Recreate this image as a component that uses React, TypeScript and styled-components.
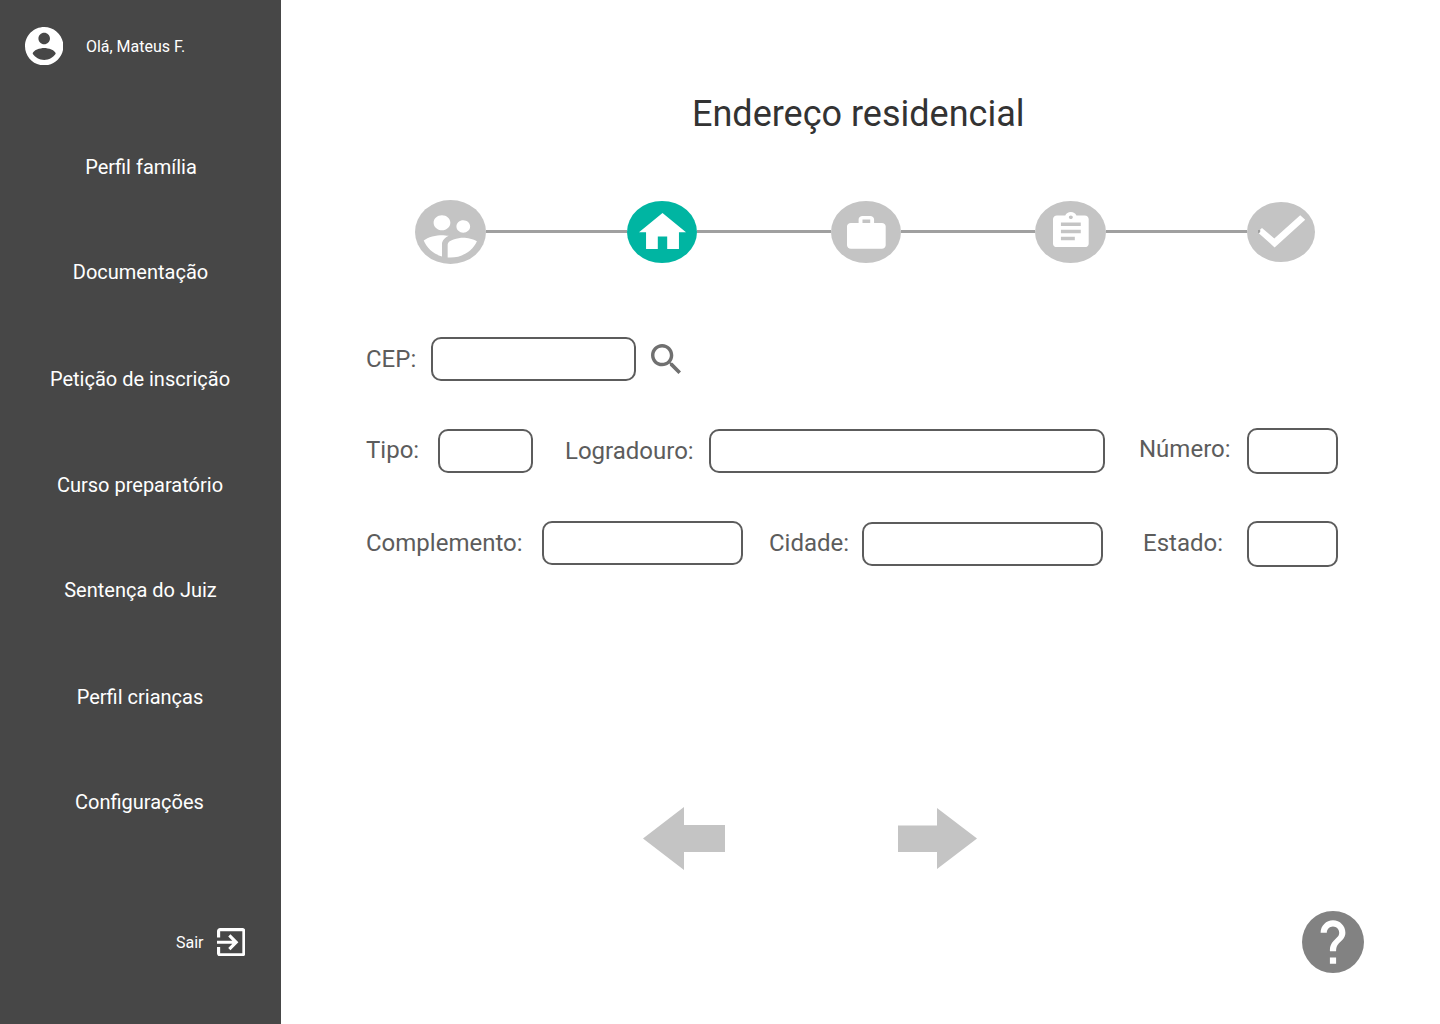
import React from "react";
import styled, { createGlobalStyle } from "styled-components";

const Global = createGlobalStyle`
  *, *::before, *::after { box-sizing: border-box; }
  body { margin: 0; background: #fff; font-family: Roboto, "Liberation Sans", sans-serif; }
`;

const Page = styled.div`
  display: flex;
  width: 1440px;
  height: 1024px;
  overflow: hidden;
`;

const Sidebar = styled.aside`
  display: flex;
  flex-direction: column;
  flex: none;
  width: 281px;
  height: 1024px;
  background: #474747;
  color: #fff;
`;

const User = styled.div`
  display: flex;
  align-items: center;
  height: 92px;
  padding-left: 24.8px;
  gap: 22.7px;
  font-size: 16px;
  line-height: 19px;
`;

const Menu = styled.nav`
  display: grid;
  grid-template-rows: 105px 107px 106px 105px 107px 105px 24px;
  margin-top: 63px;
  padding-left: 1px;
`;

const MenuItem = styled.a<{ $shift?: number }>`
  display: block;
  height: 24px;
  padding-right: ${(p) => p.$shift ?? 0}px;
  font-size: 20px;
  line-height: 24px;
  text-align: center;
  white-space: nowrap;
`;

const Logout = styled.div`
  display: flex;
  align-items: center;
  height: 30px;
  margin-top: 113px;
  padding-left: 176px;
  gap: 13px;
  font-size: 16px;
  line-height: 19px;
`;

const Main = styled.main`
  display: flex;
  flex-direction: column;
  flex: 1;
  height: 1024px;
`;

const Title = styled.h1`
  margin: 93px 0 0 411px;
  font-size: 36px;
  line-height: 42px;
  font-weight: 400;
  color: #333;
  white-space: nowrap;
`;

const Stepper = styled.div`
  display: flex;
  align-items: center;
  height: 64px;
  margin: 65px 0 0 134px;
`;

const Step = styled.div<{ $w: number; $h: number; $active?: boolean }>`
  display: grid;
  flex: none;
  width: ${(p) => p.$w}px;
  height: ${(p) => p.$h}px;
  border-radius: 50%;
  background: ${(p) => (p.$active ? "#00b5a2" : "#c4c4c4")};
`;

const Connector = styled.div<{ $w: number }>`
  flex: none;
  width: ${(p) => p.$w}px;
  height: 3px;
  margin-bottom: 1px;
  background: #a0a0a0;
`;

const Glyph = styled.svg<{ $w: number; $h: number; $x?: number; $y?: number }>`
  display: block;
  flex: none;
  width: ${(p) => p.$w}px;
  height: ${(p) => p.$h}px;
  margin: ${(p) => p.$y ?? 0}px 0 0 ${(p) => p.$x ?? 0}px;
`;

const Form = styled.form`
  display: flex;
  flex-direction: column;
  margin: 73px 0 0 85px;
`;

const Row = styled.div<{ $h: number }>`
  display: flex;
  align-items: flex-start;
  height: ${(p) => p.$h}px;
`;

const Label = styled.label<{ $w: number; $top?: number }>`
  flex: none;
  width: ${(p) => p.$w}px;
  margin-top: ${(p) => p.$top ?? 8}px;
  font-size: 24px;
  line-height: 28px;
  color: #5c5c5c;
  white-space: nowrap;
`;

const Input = styled.input<{ $w: number; $h?: number; $top?: number; $after?: number }>`
  flex: none;
  width: ${(p) => p.$w}px;
  height: ${(p) => p.$h ?? 44}px;
  margin: ${(p) => p.$top ?? 0}px ${(p) => p.$after ?? 0}px 0 0;
  padding: 0 10px;
  border: 2px solid #5c5c5c;
  border-radius: 10px;
  background: #fff;
  font: 24px Roboto, "Liberation Sans", sans-serif;
  color: #5c5c5c;
`;

const Arrows = styled.div`
  display: flex;
  align-items: center;
  height: 63px;
  margin: 241px 0 0 362px;
  gap: 173px;
`;

const Help = styled.div`
  display: flex;
  margin: 41px 0 0 1021px;
`;

type IconProps = { d: string; box: string; w: number; h: number; x?: number; y?: number; fill?: string };

const Icon = ({ d, box, w, h, x, y, fill = "#fff" }: IconProps) => (
  <Glyph $w={w} $h={h} $x={x} $y={y} viewBox={box} preserveAspectRatio="none" aria-hidden="true">
    <path d={d} fill={fill} />
  </Glyph>
);

const paths = {
  account:
    "M12 2C6.48 2 2 6.48 2 12s4.48 10 10 10 10-4.48 10-10S17.52 2 12 2zm0 3c1.66 0 3 1.34 3 3s-1.34 3-3 3-3-1.34-3-3 1.34-3 3-3zm0 14.2c-2.5 0-4.71-1.28-6-3.22.03-1.99 4-3.08 6-3.08 1.99 0 5.97 1.09 6 3.08-1.29 1.94-3.5 3.22-6 3.22z",
  people:
    "M15.6 8.34c1.07 0 1.93.86 1.93 1.93 0 1.07-.86 1.93-1.93 1.93-1.07 0-1.93-.86-1.93-1.93-.01-1.07.86-1.93 1.93-1.93zm-6-1.58c1.3 0 2.36 1.06 2.36 2.36 0 1.3-1.06 2.36-2.36 2.36s-2.36-1.06-2.36-2.36c0-1.31 1.05-2.36 2.36-2.36zm0 9.13v3.75c-2.4-.75-4.3-2.6-5.14-4.96 1.05-1.12 3.67-1.69 5.14-1.69.53 0 1.2.08 1.9.22-1.64.87-1.9 2.02-1.9 2.68zM11.99 20c-.27 0-.53-.01-.79-.04v-4.07c0-1.42 2.94-2.13 4.4-2.13 1.07 0 2.92.39 3.84 1.15-1.17 2.97-4.06 5.09-7.45 5.09z",
  home: "M10 20v-6h4v6h5v-8h3L12 3 2 12h3v8z",
  work: "M20 6h-4V4c0-1.11-.89-2-2-2h-4c-1.11 0-2 .89-2 2v2H4c-1.11 0-1.99.89-1.99 2L2 19c0 1.11.89 2 2 2h16c1.11 0 2-.89 2-2V8c0-1.11-.89-2-2-2zm-6 0h-4V4h4v2z",
  assignment:
    "M19 3h-4.18C14.4 1.84 13.3 1 12 1c-1.3 0-2.4.84-2.82 2H5c-1.1 0-2 .9-2 2v14c0 1.1.9 2 2 2h14c1.1 0 2-.9 2-2V5c0-1.1-.9-2-2-2zm-7 0c.55 0 1 .45 1 1s-.45 1-1 1-1-.45-1-1 .45-1 1-1zm2 14H7v-2h7v2zm3-4H7v-2h10v2zm0-4H7V7h10v2z",
  check: "M15 26L27.3 36.5L53.2 13.3L58.2 17.7L27.6 45.4L11.8 31.3L13.2 30V27.5z",
  search:
    "M15.5 14h-.79l-.28-.27C15.41 12.59 16 11.11 16 9.5 16 5.91 13.09 3 9.5 3S3 5.91 3 9.5 5.91 16 9.5 16c1.61 0 3.09-.59 4.23-1.57l.27.28v.79l5 4.99L20.49 19l-4.99-5zm-6 0C7.01 14 5 11.99 5 9.5S7.01 5 9.5 5 14 7.01 14 9.5 11.99 14 9.5 14z",
  exit: "M10.09 15.59L11.5 17l5-5-5-5-1.41 1.41L12.67 11H3v2h9.67l-2.58 2.59zM19 3H5c-1.11 0-2 .9-2 2v4h2V5h14v14H5v-4H3v4c0 1.1.89 2 2 2h14c1.1 0 2-.9 2-2V5c0-1.1-.9-2-2-2z",
  question:
    "M11 19h2v-2h-2zM15.07 11.25l-.9.92C13.45 12.9 13 13.5 13 15h-2v-.5c0-1.1.45-2.1 1.17-2.83l1.24-1.26c.37-.36.59-.86.59-1.41 0-1.1-.9-2-2-2s-2 .9-2 2H8c0-2.21 1.79-4 4-4s4 1.79 4 4c0 .88-.36 1.68-.93 2.25z",
  left: "M0 31.5L41 0V18H82V45H41V63z",
  right: "M79 30.5L39 0V17.5H0V44H39V61z",
};

const menu = [
  { text: "Perfil família", shift: 0 },
  { text: "Documentação", shift: 1 },
  { text: "Petição de inscrição", shift: 2 },
  { text: "Curso preparatório", shift: 2 },
  { text: "Sentença do Juiz", shift: 1 },
  { text: "Perfil crianças", shift: 2 },
  { text: "Configurações", shift: 3 },
];

export default function App() {
  return (
    <Page>
      <Global />
      <Sidebar>
        <User>
          <Icon d={paths.account} box="2 2 20 20" w={38.4} h={38.4} />
          <span>Olá, Mateus F.</span>
        </User>
        <Menu>
          {menu.map((m) => (
            <MenuItem key={m.text} $shift={m.shift}>{m.text}</MenuItem>
          ))}
        </Menu>
        <Logout>
          <span>Sair</span>
          <Icon d={paths.exit} box="3 3 18 18" w={28.5} h={28.5} />
        </Logout>
      </Sidebar>
      <Main>
        <Title>Endereço residencial</Title>
        <Stepper>
          <Step $w={71} $h={64}>
            <Icon d={paths.people} box="2 2 20 20" w={71} h={64} />
          </Step>
          <Connector $w={141} />
          <Step $w={70} $h={62} $active>
            <Icon d={paths.home} box="2 3 20 17" w={47} h={36.5} x={12} y={11.7} />
          </Step>
          <Connector $w={134} />
          <Step $w={70} $h={62}>
            <Icon d={paths.work} box="2 2 20 19" w={38.7} h={32.7} x={16.2} y={15} />
          </Step>
          <Connector $w={134} />
          <Step $w={71} $h={62}>
            <Icon d={paths.assignment} box="3 1 18 20" w={35.7} h={35.3} x={18.2} y={11} />
          </Step>
          <Connector $w={141} />
          <Step $w={68} $h={60}>
            <Glyph $w={68} $h={60} viewBox="0 0 68 60" aria-hidden="true">
              <path d="M11 28h3v3h-3z" fill="#a0a0a0" />
              <path d={paths.check} fill="#fff" />
            </Glyph>
          </Step>
        </Stepper>
        <Form>
          <Row $h={92}>
            <Label $w={65}>CEP:</Label>
            <Input $w={205} $after={15} />
            <Icon d={paths.search} box="3 3 17.49 17.49" w={30} h={30} y={7} fill="#707070" />
          </Row>
          <Row $h={92}>
            <Label $w={72} $top={7}>Tipo:</Label>
            <Input $w={95} $after={32} />
            <Label $w={144}>Logradouro:</Label>
            <Input $w={396} $after={34} />
            <Label $w={108} $top={6}>Número:</Label>
            <Input $w={91} $h={46} $top={-1} />
          </Row>
          <Row $h={45}>
            <Label $w={176}>Complemento:</Label>
            <Input $w={201} $after={26} />
            <Label $w={93}>Cidade:</Label>
            <Input $w={241} $top={1} $after={40} />
            <Label $w={104}>Estado:</Label>
            <Input $w={91} $h={46} />
          </Row>
        </Form>
        <Arrows>
          <Icon d={paths.left} box="0 0 82 63" w={82} h={63} fill="#c4c4c4" />
          <Icon d={paths.right} box="0 0 79 61" w={79} h={61} fill="#c4c4c4" />
        </Arrows>
        <Help>
          <Glyph $w={62} $h={62} viewBox="2 2 20 20" aria-hidden="true">
            <circle cx="12" cy="12" r="10" fill="#828282" />
            <path d={paths.question} fill="#fff" />
          </Glyph>
        </Help>
      </Main>
    </Page>
  );
}
